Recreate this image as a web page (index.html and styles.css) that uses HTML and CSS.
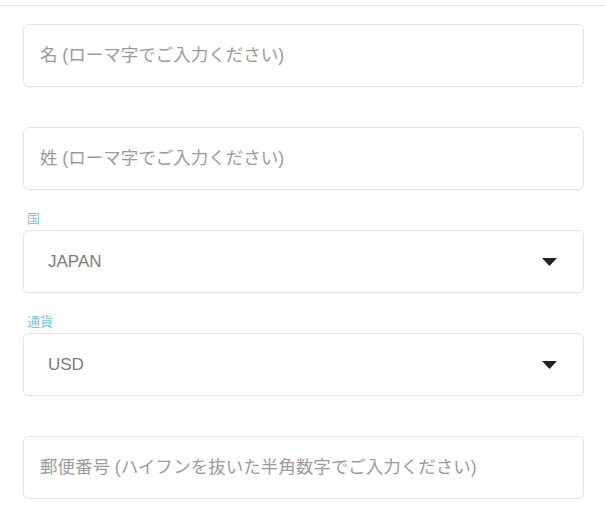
FILE: index.html
```html
<!DOCTYPE html>
<html lang="ja">
<head>
<meta charset="utf-8">
<link rel="stylesheet" href="styles.css">
</head>
<body>
<div class="topbar"></div>
<form class="form">
  <div class="field first">
    <div class="label-area"></div>
    <input class="box input" type="text" placeholder="名 (ローマ字でご入力ください)">
  </div>
  <div class="field">
    <div class="label-area"></div>
    <input class="box input" type="text" placeholder="姓 (ローマ字でご入力ください)">
  </div>
  <div class="field">
    <div class="label-area"><span class="label">国</span></div>
    <div class="select-wrap">
      <select class="box select"><option>JAPAN</option></select>
      <svg class="caret" width="15" height="8" viewBox="0 0 15 8"><path d="M0 0 H15 L7.5 8 Z" fill="#222"/></svg>
    </div>
  </div>
  <div class="field">
    <div class="label-area"><span class="label">通貨</span></div>
    <div class="select-wrap">
      <select class="box select"><option>USD</option></select>
      <svg class="caret" width="15" height="8" viewBox="0 0 15 8"><path d="M0 0 H15 L7.5 8 Z" fill="#222"/></svg>
    </div>
  </div>
  <div class="field">
    <div class="label-area"></div>
    <input class="box input" type="text" placeholder="郵便番号 (ハイフンを抜いた半角数字でご入力ください)">
  </div>
</form>
</body>
</html>
```

FILE: styles.css
```css
html, body {
  margin: 0;
  padding: 0;
  background: #ffffff;
}
body {
  font-family: "Liberation Sans", "Noto Sans CJK JP", sans-serif;
}
.topbar {
  height: 5px;
  border-bottom: 1px solid #e2e2e2;
}
.form {
  display: flex;
  flex-direction: column;
  padding: 0 22px 0 23px;
}
.field {
  display: flex;
  flex-direction: column;
}
.label-area {
  height: 40px;
  display: flex;
  align-items: flex-end;
}
.field.first .label-area {
  height: 18px;
}
.label {
  font-family: "Noto Sans CJK JP", sans-serif;
  font-size: 13px;
  line-height: 14px;
  color: #74c8e8;
  margin: 0 0 5px 4px;
}
.box {
  box-sizing: border-box;
  width: 100%;
  height: 63px;
  margin: 0;
  border: 1px solid #e4e4e4;
  border-radius: 6px;
  background: #ffffff;
  outline: none;
  box-shadow: 0 1px 1px rgba(0, 0, 0, 0.03);
}
.input {
  padding: 0 16px;
  font-family: "Liberation Sans", "Noto Sans CJK JP", sans-serif;
  font-size: 17.5px;
  color: #333;
}
.input::placeholder {
  color: #9b9b9b;
  opacity: 1;
}
.select-wrap {
  position: relative;
}
.select {
  -webkit-appearance: none;
  appearance: none;
  padding: 0 24px;
  font-family: "Liberation Sans", "Noto Sans CJK JP", sans-serif;
  font-size: 17px;
  color: #7c7c7c;
}
.caret {
  position: absolute;
  right: 27px;
  top: 28px;
  pointer-events: none;
}
```
